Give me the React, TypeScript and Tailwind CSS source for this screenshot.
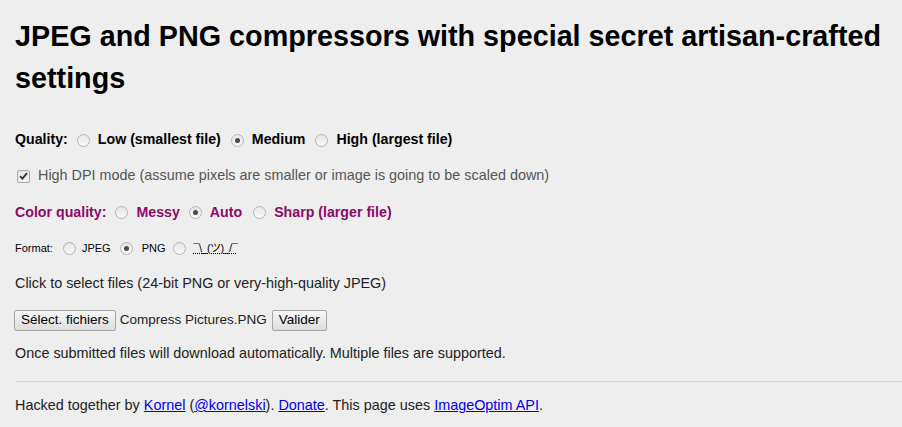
import React from "react";

function Radio({ checked = false }: { checked?: boolean }) {
  return (
    <span className="relative inline-flex h-[13px] w-[13px] shrink-0 items-center justify-center rounded-full border border-[#b4b4b4] bg-gradient-to-b from-[#e6e6e6] to-[#f8f8f8]">
      {checked && <span className="h-[5px] w-[5px] rounded-full bg-[#4a4a4a]" />}
    </span>
  );
}

function Checkbox() {
  return (
    <span className="inline-flex h-[13px] w-[13px] shrink-0 items-center justify-center rounded-[2px] border border-[#a9a9a9] bg-gradient-to-b from-[#e4e4e4] to-[#f4f4f4]">
      <svg width="9" height="8" viewBox="0 0 9 8">
        <path d="M1 4.2 L3.4 6.6 L8 1.2" fill="none" stroke="#333" strokeWidth="1.8" />
      </svg>
    </span>
  );
}

function Option({ label, checked, gap = "ml-[9px] mr-[8px]" }: { label: string; checked?: boolean; gap?: string }) {
  return (
    <>
      <span className={gap + " inline-flex"}>
        <Radio checked={checked} />
      </span>
      <span>{label}</span>
    </>
  );
}

function Button({ children }: { children: React.ReactNode }) {
  return (
    <button className="h-[21px] rounded-[2px] border border-[#a6a6a6] bg-gradient-to-b from-[#f7f7f7] to-[#dddddd] px-[6px] text-[13.5px] leading-none text-black">
      {children}
    </button>
  );
}

export default function App() {
  return (
    <div
      className="min-h-[427px] w-[902px] overflow-hidden bg-[#eeeeee] text-[#222]"
      style={{ fontFamily: '"Liberation Sans", Arial, sans-serif' }}
    >
      <div className="pl-[15px]">
        <h1 className="pt-[15px] text-[28.75px] font-bold leading-[42px] text-black">
          JPEG and PNG compressors with special secret artisan-crafted settings
        </h1>

        <div className="mt-[23px] flex flex-col">
          <div className="flex h-[36px] items-center text-[14.2px] font-bold text-black">
            <span>Quality:</span>
            <Option label="Low (smallest file)" />
            <Option label="Medium" checked gap="ml-[10px] mr-[8px]" />
            <Option label="High (largest file)" gap="ml-[10px] mr-[8px]" />
          </div>

          <div className="flex h-[36px] items-center text-[14.4px] text-[#555]">
            <span className="ml-[2px] mr-[8px] inline-flex">
              <Checkbox />
            </span>
            <span>High DPI mode (assume pixels are smaller or image is going to be scaled down)</span>
          </div>

          <div className="flex h-[37px] items-center text-[14.2px] font-bold text-[#8a0a66]">
            <span>Color quality:</span>
            <Option label="Messy" />
            <Option label="Auto" checked />
            <Option label="Sharp (larger file)" gap="ml-[11px] mr-[8px]" />
          </div>

          <div className="flex h-[35px] items-center text-[11px] text-black">
            <span>Format:</span>
            <Option label="JPEG" gap="ml-[10px] mr-[6px]" />
            <Option label="PNG" checked gap="ml-[9px] mr-[9px]" />
            <span className="ml-[8px] mr-[7px] inline-flex">
              <Radio />
            </span>
            <span
              className="tracking-[-0.6px] underline decoration-dotted"
              style={{ fontFamily: '"Liberation Sans", "Noto Sans CJK JP", sans-serif' }}
            >
              ¯\_(ツ)_/¯
            </span>
          </div>

          <div className="flex h-[36px] items-center text-[14.4px]">
            Click to select files (24-bit PNG or very-high-quality JPEG)
          </div>

          <div className="flex h-[36px] items-center text-[13.33px]">
            <div className="-ml-[1px]">
              <Button>Sélect. fichiers</Button>
            </div>
            <span className="ml-[4px] mr-[5px] text-[13.5px]">Compress Pictures.PNG</span>
            <Button>Valider</Button>
          </div>

          <div className="flex h-[32px] items-center text-[14.4px]">
            Once submitted files will download automatically. Multiple files are supported.
          </div>
        </div>

        <hr className="mt-[11px] border-0 border-t border-[#d6d6d6]" />

        <div className="flex h-[48px] items-center text-[14.4px]">
          <span>
            Hacked together by{" "}
            <a href="#" className="text-[#0000ee] underline">Kornel</a>{" "}
            (<a href="#" className="text-[#0000ee] underline">@kornelski</a>).{" "}
            <a href="#" className="text-[#0000ee] underline">Donate</a>. This page uses{" "}
            <a href="#" className="text-[#0000ee] underline">ImageOptim API</a>.
          </span>
        </div>
      </div>
    </div>
  );
}
